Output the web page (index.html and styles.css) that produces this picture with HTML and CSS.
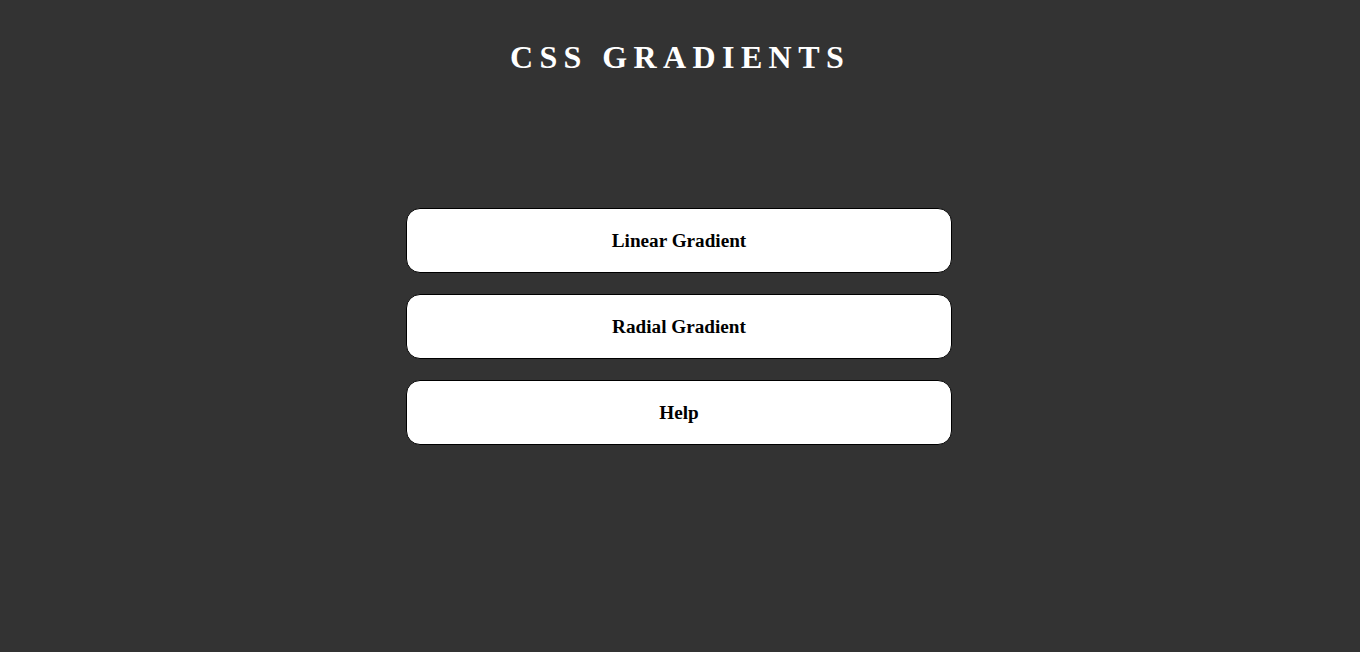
FILE: index.html
```html
<!DOCTYPE html>
<html>
<head>
<meta charset="utf-8">
<title>CSS Gradients</title>
<link rel="stylesheet" href="styles.css">
</head>
<body>
<header class="header">
  <h1 class="title">CSS GRADIENTS</h1>
</header>
<nav class="menu">
  <button class="menu-btn">Linear Gradient</button>
  <button class="menu-btn">Radial Gradient</button>
  <button class="menu-btn">Help</button>
</nav>
</body>
</html>
```
FILE: styles.css
```css
html, body {
  margin: 0;
  padding: 0;
  background: #333333;
}
body {
  font-family: "Liberation Serif", "Times New Roman", serif;
  min-height: 652px;
}
.header {
  display: flex;
  justify-content: center;
  padding-top: 39px;
}
.title {
  margin: 0;
  font-size: 32px;
  font-weight: bold;
  color: #ffffff;
  letter-spacing: 6.4px;
  line-height: 36px;
}
.menu {
  display: flex;
  flex-direction: column;
  align-items: center;
  gap: 21px;
  margin-top: 133px;
}
.menu-btn {
  box-sizing: border-box;
  width: 546px;
  height: 65px;
  margin-left: -2px;
  background: #ffffff;
  border: 1px solid #000000;
  border-radius: 14px;
  font-family: "Liberation Serif", "Times New Roman", serif;
  font-size: 19.2px;
  font-weight: bold;
  color: #000000;
  cursor: pointer;
}
```
